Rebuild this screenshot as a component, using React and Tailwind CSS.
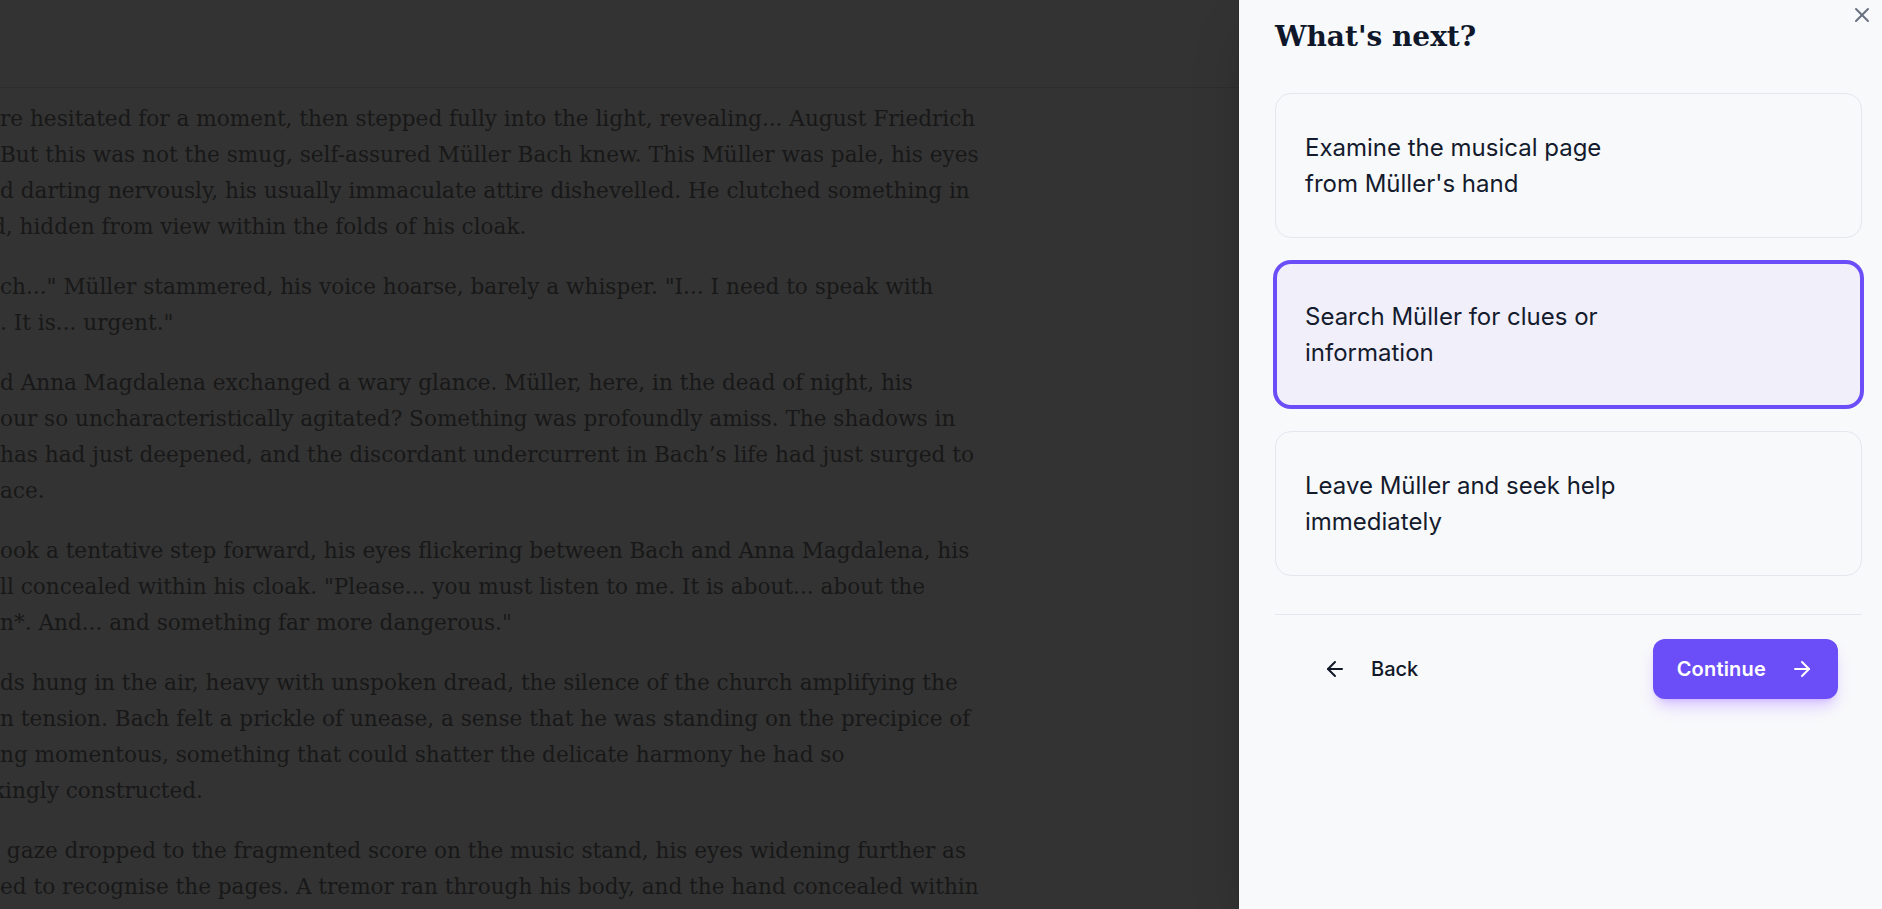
import { X, ArrowLeft, ArrowRight } from 'lucide-react'
import clsx from 'clsx'

// story text, one entry per visible line (left edge is cut off by the window)
const story = [
  [
    { t: 're hesitated for a moment, then stepped fully into the light, revealing... August Friedrich' },
    { t: 'But this was not the smug, self-assured Müller Bach knew. This Müller was pale, his eyes' },
    { t: 'd darting nervously, his usually immaculate attire dishevelled. He clutched something in' },
    { t: 'd, hidden from view within the folds of his cloak.', cut: true },
  ],
  [
    { t: 'ch..." Müller stammered, his voice hoarse, barely a whisper. "I... I need to speak with' },
    { t: '. It is... urgent."' },
  ],
  [
    { t: 'd Anna Magdalena exchanged a wary glance. Müller, here, in the dead of night, his' },
    { t: 'our so uncharacteristically agitated? Something was profoundly amiss. The shadows in' },
    { t: 'has had just deepened, and the discordant undercurrent in Bach’s life had just surged to' },
    { t: 'ace.' },
  ],
  [
    { t: 'ook a tentative step forward, his eyes flickering between Bach and Anna Magdalena, his' },
    { t: 'll concealed within his cloak. "Please... you must listen to me. It is about... about the' },
    { t: 'n*. And... and something far more dangerous."' },
  ],
  [
    { t: 'ds hung in the air, heavy with unspoken dread, the silence of the church amplifying the' },
    { t: 'n tension. Bach felt a prickle of unease, a sense that he was standing on the precipice of' },
    { t: 'ng momentous, something that could shatter the delicate harmony he had so' },
    { t: 'kingly constructed.', cut: true },
  ],
  [
    { t: '\u00a0gaze dropped to the fragmented score on the music stand, his eyes widening further as' },
    { t: 'ed to recognise the pages. A tremor ran through his body, and the hand concealed within' },
  ],
]

const choices = [
  { id: 'examine', label: "Examine the musical page from Müller's hand" },
  { id: 'search', label: 'Search Müller for clues or information' },
  { id: 'leave', label: 'Leave Müller and seek help immediately' },
]

const serif = { fontFamily: '"DejaVu Serif", "Liberation Serif", serif' }

export default function App() {
  const selected = 'search'

  return (
    <div className="flex h-screen w-full overflow-hidden bg-[#333333]" style={{ fontFamily: 'Inter, "Noto Sans", sans-serif' }}>
      {/* story, dimmed behind the drawer */}
      <main className="flex-1 min-w-0 overflow-hidden">
        <div className="h-[88px] border-b border-[#2d2d2d]" />
        <div className="pt-[13px] space-y-6 text-[21.6px] leading-9 text-[#181818]" style={serif}>
          {story.map((para, i) => (
            <div key={i}>
              {para.map((line, j) => (
                <p key={j} className={clsx('whitespace-nowrap', line.cut && '-ml-[8px]')}>
                  {line.t}
                </p>
              ))}
            </div>
          ))}
        </div>
      </main>

      {/* drawer */}
      <aside className="relative w-[644px] shrink-0 h-full bg-[#f8f9fb] border-l border-[#2c2c2c] shadow-2xl pl-9 pr-5 pt-[19px]">
        <button className="absolute top-[3px] right-2 text-gray-500">
          <X size={24} strokeWidth={2} />
        </button>

        <h2 className="text-[28px] leading-[35px] font-bold text-[#0f172a] mb-[39px]" style={serif}>
          What's next?
        </h2>

        <div className="space-y-6">
          {choices.map((c) => (
            <div
              key={c.id}
              className={clsx(
                'rounded-2xl',
                c.id === selected
                  ? 'border-2 px-[28px] pt-[35px] pb-[34px] border-[#6b4ef7] ring-2 ring-[#6b4ef7] bg-[#f0effa]'
                  : 'border px-[29px] pt-9 pb-[35px] border-[#e3e7ee] bg-[#f8f9fb]'
              )}
            >
              <p className="max-w-xs text-[24px] leading-9 text-[#141b2d]">{c.label}</p>
            </div>
          ))}
        </div>

        <div className="mt-[38px] border-t border-[#e3e7ee] pt-6 px-6 flex items-center justify-between">
          <button className="flex items-center gap-6 px-6 py-4 text-xl font-medium text-[#111827]">
            <ArrowLeft size={24} />
            Back
          </button>
          <button className="flex items-center gap-6 px-6 py-4 rounded-xl bg-[#6b4ef7] text-white text-xl font-semibold tracking-[0.01em] shadow-lg shadow-violet-500/30">
            Continue
            <ArrowRight size={24} />
          </button>
        </div>
      </aside>
    </div>
  )
}
